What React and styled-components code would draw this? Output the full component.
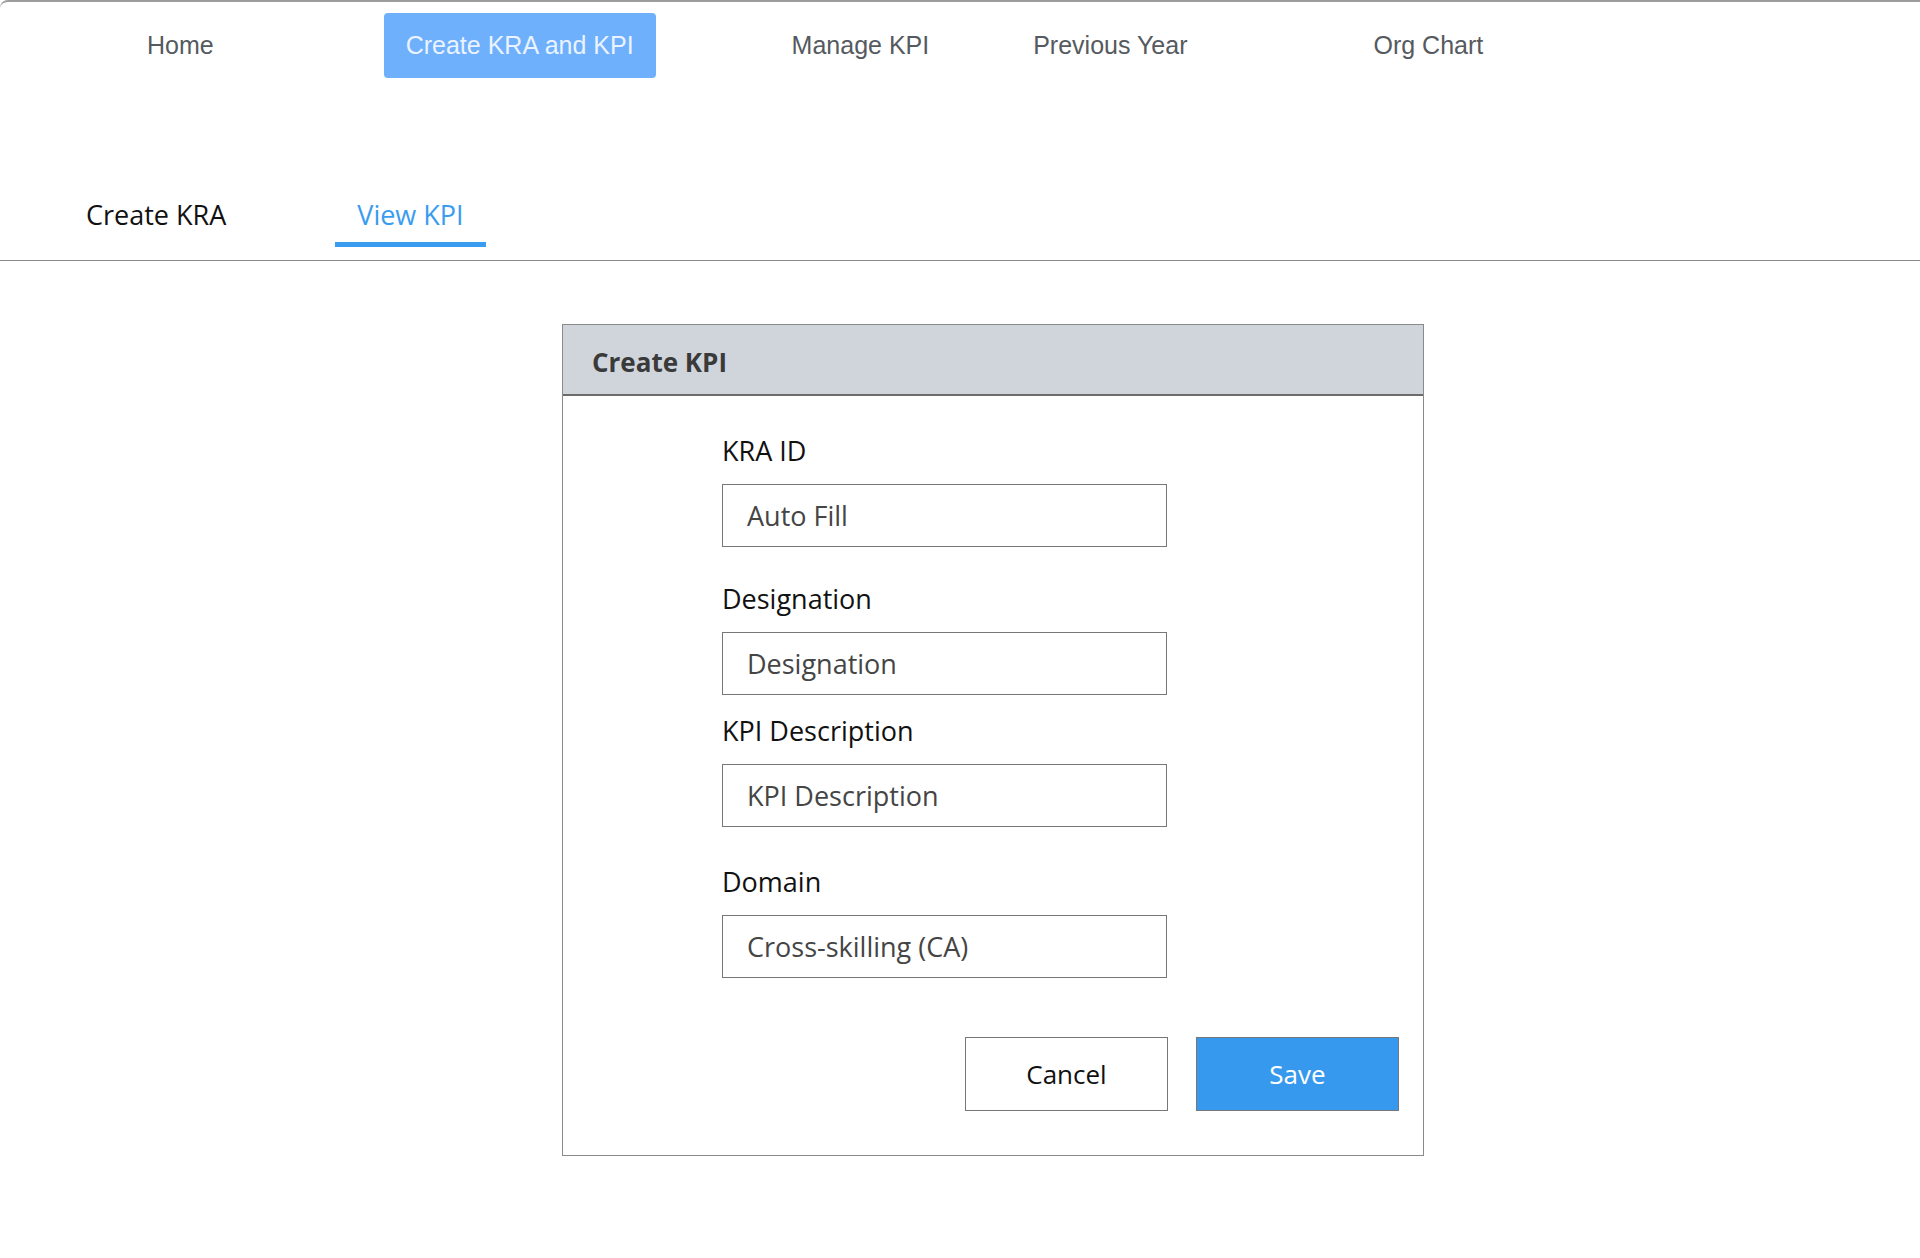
import React from 'react';
import styled, { createGlobalStyle } from 'styled-components';

const GlobalStyle = createGlobalStyle`
  html, body {
    margin: 0;
    padding: 0;
    background: #fff;
  }
  body {
    font-family: "Open Sans", "Noto Sans", sans-serif;
  }
  * {
    box-sizing: border-box;
  }
`;

const navItems = [
  { label: 'Home', offset: 147 },
  { label: 'Create KRA and KPI', offset: 170, active: true },
  { label: 'Manage KPI', offset: 136 },
  { label: 'Previous Year', offset: 104 },
  { label: 'Org Chart', offset: 186 },
];

const fields = [
  { label: 'KRA ID', placeholder: 'Auto Fill', top: 0 },
  { label: 'Designation', placeholder: 'Designation', top: 34 },
  { label: 'KPI Description', placeholder: 'KPI Description', top: 18 },
  { label: 'Domain', value: 'Cross-skilling (CA)', top: 37 },
];

const App = () => {
  return (
    <>
      <GlobalStyle />
      <Page>
        <TopNav>
          {navItems.map((item) => (
            <NavItem key={item.label} $offset={item.offset} $active={item.active}>
              {item.label}
            </NavItem>
          ))}
        </TopNav>

        <TabBar>
          <Tab>Create KRA</Tab>
          <Tab $active>View KPI</Tab>
        </TabBar>

        <Main>
          <Card>
            <CardHeader>Create KPI</CardHeader>
            <CardBody>
              {fields.map((f) => (
                <Field key={f.label} $top={f.top}>
                  <Label>{f.label}</Label>
                  {f.value ? (
                    <Input type="text" value={f.value} readOnly />
                  ) : (
                    <Input type="text" placeholder={f.placeholder} />
                  )}
                </Field>
              ))}
              <Actions>
                <Button type="button">Cancel</Button>
                <Button type="button" $primary>Save</Button>
              </Actions>
            </CardBody>
          </Card>
        </Main>
      </Page>
    </>
  );
};

const Page = styled.div`
  min-height: 1258px;
  border-top: 2px solid #9c9c9c;
  border-top-left-radius: 8px;
  background: #fff;
`;

const TopNav = styled.nav`
  display: flex;
  align-items: center;
  height: 76px;
  padding-top: 11px;
  font-family: "Liberation Sans", Arial, sans-serif;
  font-size: 25px;
`;

const NavItem = styled.div`
  margin-left: ${(p) => p.$offset}px;
  display: flex;
  align-items: center;
  white-space: nowrap;
  color: #555a60;
  cursor: pointer;
  ${(p) =>
    p.$active &&
    `
    height: 65px;
    padding: 0 22px;
    border-radius: 4px;
    background: #6eb0fc;
    color: #eaf3ff;
  `}
`;

const TabBar = styled.div`
  display: flex;
  align-items: flex-end;
  gap: 87px;
  margin-top: 119px;
  padding: 0 0 13px 64px;
  border-bottom: 1px solid #8a8a8a;
`;

const Tab = styled.div`
  padding: 0 22px 9px;
  font-size: 27px;
  line-height: 36px;
  color: ${(p) => (p.$active ? '#3a9cf0' : '#111')};
  border-bottom: 5px solid ${(p) => (p.$active ? '#3a9cf0' : 'transparent')};
  cursor: pointer;
`;

const Main = styled.main`
  padding: 63px 0 0 562px;
`;

const Card = styled.section`
  width: 862px;
  border: 1px solid #8a8a8a;
  background: #fff;
`;

const CardHeader = styled.h2`
  margin: 0;
  height: 71px;
  padding: 4px 0 0 29px;
  display: flex;
  align-items: center;
  background: #d0d5dc;
  border-bottom: 2px solid #6c6c6c;
  font-size: 26px;
  font-weight: 700;
  color: #3a3a3a;
`;

const CardBody = styled.div`
  display: flex;
  flex-direction: column;
  padding: 37px 24px 44px 159px;
`;

const Field = styled.div`
  display: flex;
  flex-direction: column;
  gap: 15px;
  margin-top: ${(p) => p.$top}px;
`;

const Label = styled.label`
  font-size: 27px;
  line-height: 36px;
  color: #111;
`;

const Input = styled.input`
  width: 445px;
  height: 63px;
  padding: 0 24px;
  border: 1px solid #777;
  border-radius: 0;
  outline: none;
  font-family: "Open Sans", "Noto Sans", sans-serif;
  font-size: 27px;
  color: #454545;
  background: #fff;

  &::placeholder {
    color: #454545;
    opacity: 1;
  }
`;

const Actions = styled.div`
  display: flex;
  justify-content: flex-end;
  gap: 28px;
  margin-top: 59px;
`;

const Button = styled.button`
  width: 203px;
  height: 74px;
  border: 1px solid #777;
  border-radius: 0;
  font-family: "Open Sans", "Noto Sans", sans-serif;
  font-size: 26px;
  cursor: pointer;
  background: ${(p) => (p.$primary ? '#3699ee' : '#fff')};
  color: ${(p) => (p.$primary ? '#fff' : '#111')};
`;

export default App;
